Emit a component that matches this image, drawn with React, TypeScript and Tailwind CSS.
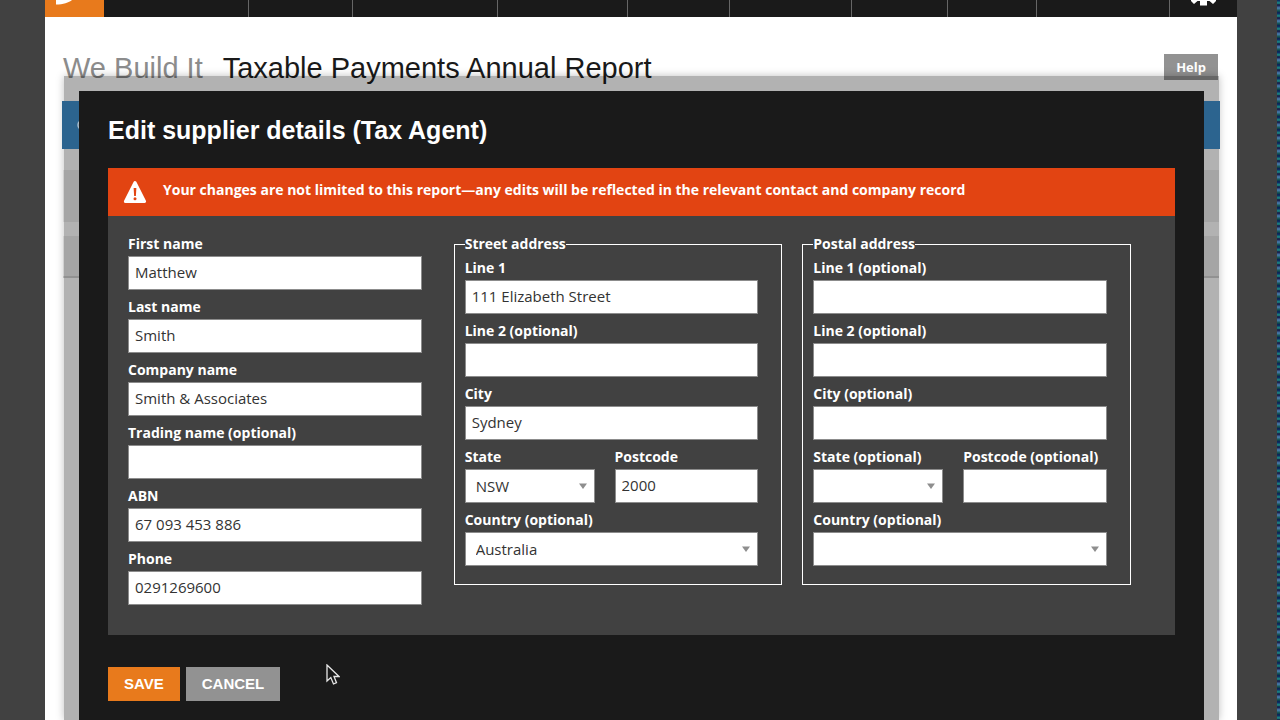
import { useState } from 'react';
import type { ReactNode } from 'react';

type FieldProps = {
  id: string;
  label: string;
  value?: string;
};

const navItems = [
  'w-[145px]',
  'w-[104px]',
  'w-[145px]',
  'w-[130px]',
  'w-[102px]',
  'w-[122px]',
  'w-[96px]',
  'w-[89px]',
];

function TextField({ id, label, value = '' }: FieldProps) {
  const [text, setText] = useState(value);

  return (
    <div className="min-w-0">
      <label htmlFor={id} className="block mb-0.5 text-sm leading-5 font-bold whitespace-nowrap">
        {label}
      </label>
      <input
        id={id}
        type="text"
        value={text}
        onChange={(e) => setText(e.target.value)}
        className="block w-full h-[34px] px-1.5 pb-0.5 bg-white border border-[#8c8c8c] text-[15px] leading-5 text-[#333333] outline-none"
      />
    </div>
  );
}

function SelectField({ id, label, value = '', options }: FieldProps & { options: string[] }) {
  const [selected, setSelected] = useState(value);

  return (
    <div className="min-w-0">
      <label htmlFor={id} className="block mb-0.5 text-sm leading-5 font-bold whitespace-nowrap">
        {label}
      </label>
      <div className="relative">
        <select
          id={id}
          value={selected}
          onChange={(e) => setSelected(e.target.value)}
          className="block appearance-none w-full h-[34px] px-2.5 bg-white border border-[#8c8c8c] rounded-none text-[15px] leading-5 text-[#333333] outline-none"
        >
          {options.map((option) => (
            <option key={option} value={option}>{option}</option>
          ))}
        </select>
        <svg viewBox="0 0 8 6" className="absolute right-2 top-3.5 w-2 h-1.5 pointer-events-none" aria-hidden="true">
          <path d="M0 0.5h8L4 6z" fill="#8e8e8e" />
        </svg>
      </div>
    </div>
  );
}

function AddressGroup({ title, children }: { title: string; children: ReactNode }) {
  return (
    <fieldset className="min-w-0 self-start border border-white pl-2.5 pr-[23px] pb-[18px]">
      <legend className="text-sm leading-5 font-bold">{title}</legend>
      <div className="flex flex-col gap-[7px] pt-1">{children}</div>
    </fieldset>
  );
}

function EditSupplier() {
  const states = ['', 'ACT', 'NSW', 'NT', 'QLD', 'SA', 'TAS', 'VIC', 'WA'];
  const countries = ['', 'Australia', 'New Zealand'];

  return (
    <form className="h-full bg-[#1a1a1a] px-[29px] pt-[25px] text-white" onSubmit={(e) => e.preventDefault()}>
      <h2 className="font-['Liberation_Sans',sans-serif] text-[25px] leading-7 font-bold mb-6">
        Edit supplier details (Tax Agent)
      </h2>

      {/* Warning banner */}
      <div className="flex items-center h-12 px-[15px] gap-4 bg-[#e24412]">
        <svg viewBox="0 0 24 24" className="w-6 h-6 shrink-0" aria-hidden="true">
          <path d="M12 2.500 21.600 21.500H2.400z" fill="#fff" stroke="#fff" strokeWidth="3" strokeLinejoin="round" />
          <path d="M10.600 8h2.800l-.5 8h-1.800z" fill="#e24412" />
          <circle cx="12" cy="18.8" r="1.5" fill="#e24412" />
        </svg>
        <p className="pb-1 text-sm leading-5 font-bold">
          Your changes are not limited to this report—any edits will be reflected in the relevant contact and company record
        </p>
      </div>

      <div className="grid grid-cols-[306fr_329fr_329fr] gap-5 bg-[#414141] pl-5 pr-11 pt-[18px] pb-[30px]">
        <div className="flex flex-col gap-[7px] pr-3">
          <TextField id="first-name" label="First name" value="Matthew" />
          <TextField id="last-name" label="Last name" value="Smith" />
          <TextField id="company" label="Company name" value="Smith & Associates" />
          <TextField id="trading" label="Trading name (optional)" />
          <TextField id="abn" label="ABN" value="67 093 453 886" />
          <TextField id="phone" label="Phone" value="0291269600" />
        </div>

        <AddressGroup title="Street address">
          <TextField id="street-1" label="Line 1" value="111 Elizabeth Street" />
          <TextField id="street-2" label="Line 2 (optional)" />
          <TextField id="street-city" label="City" value="Sydney" />
          <div className="grid grid-cols-[130fr_144fr] gap-5">
            <SelectField id="street-state" label="State" value="NSW" options={states} />
            <TextField id="street-postcode" label="Postcode" value="2000" />
          </div>
          <SelectField id="street-country" label="Country (optional)" value="Australia" options={countries} />
        </AddressGroup>

        <AddressGroup title="Postal address">
          <TextField id="postal-1" label="Line 1 (optional)" />
          <TextField id="postal-2" label="Line 2 (optional)" />
          <TextField id="postal-city" label="City (optional)" />
          <div className="grid grid-cols-[130fr_144fr] gap-5">
            <SelectField id="postal-state" label="State (optional)" options={states} />
            <TextField id="postal-postcode" label="Postcode (optional)" />
          </div>
          <SelectField id="postal-country" label="Country (optional)" options={countries} />
        </AddressGroup>
      </div>

      <div className="flex gap-1.5 pt-8 font-['Liberation_Sans',sans-serif] text-[15px] leading-5 font-bold">
        <button type="submit" className="h-[34px] px-4 bg-[#e87a1c]">SAVE</button>
        <button type="button" className="h-[34px] px-4 bg-[#929292]">CANCEL</button>
      </div>
    </form>
  );
}

export default function App() {
  return (
    <div className="relative min-h-screen bg-[#414141] pl-[45px] pr-[43px] font-['Open_Sans',sans-serif]">
      <div className="relative min-h-screen bg-white">
        {/* Top navigation */}
        <header className="flex h-[17px] bg-[#1a1a1a] overflow-hidden">
          <div className="w-[59px] shrink-0 bg-[#e87a1c]">
            <svg viewBox="0 0 59 17" className="w-full h-full" aria-hidden="true">
              <path d="M11 0H27C24 2.500 18 4.500 11 4.500z" fill="#fff" />
            </svg>
          </div>
          <nav className="flex grow">
            {navItems.map((width, i) => (
              <div key={i} className={`${width} border-r border-[#666666]`} />
            ))}
            <div className="grow border-r border-[#666666]" />
          </nav>
          <div className="w-[67px] shrink-0">
            <svg viewBox="0 0 67 17" className="w-full h-full" aria-hidden="true">
              <path d="M21 0h25v1l-3 3-3.500-3H37v4.500h-7V1h-2.500L24 4l-3-3z" fill="#fff" />
            </svg>
          </div>
        </header>

        <div className="flex items-start justify-between pl-[18px] pr-[19px] h-[84px] pt-[35px]">
          <h1 className="flex gap-5 font-['Liberation_Sans',sans-serif] text-[29px] leading-8 text-[#1a1a1a]">
            <span className="text-[#8c8c8c]">We Build It</span>
            <span>Taxable Payments Annual Report</span>
          </h1>
          <button type="button" className="mt-0.5 h-[26px] px-3 bg-[#929292] text-white text-[13px] leading-5 font-bold">
            Help
          </button>
        </div>

        {/* Report rows behind the dialog */}
        <div className="mx-[18px] pt-[69px]">
          <div className="h-[52px] bg-[#ececec]" />
          <div className="mt-3.5 h-[42px] bg-[#ececec] border-b-2 border-[#d0d0d0]" />
        </div>

        <div className="absolute top-[76px] bottom-0 left-[19px] right-[18px] bg-black/30 shadow-[0_0_8px_rgba(0,0,0,0.25)]" />
        <div className="absolute top-[101px] left-[17px] right-[17px] h-12 bg-[#2c648f]">
          <svg viewBox="0 0 12 12" className="absolute left-[15px] top-[18px] w-3 h-3" aria-hidden="true">
            <circle cx="6" cy="6" r="5" fill="none" stroke="#a9bccb" strokeWidth="1.5" />
          </svg>
        </div>
        <div className="absolute top-[91px] bottom-0 left-[34px] right-[33px]">
          <EditSupplier />
        </div>

        <svg viewBox="0 0 14 22" className="absolute left-[281px] top-[664px] w-3.5 h-[22px] pointer-events-none" aria-hidden="true">
          <path d="M1 1v16l3.800-3.500L7.500 20l3-1.300L8 12.500h5z" fill="#1a1a1a" stroke="#e8e8e8" strokeWidth="1.3" />
        </svg>
      </div>

      {/* Speckled screen edge */}
      <div className="absolute inset-y-0 right-0 w-[3px] bg-[repeating-linear-gradient(180deg,#0b1a5c_0px,#1c8f86_3px,#12123f_5px,#4b7fb0_8px,#0d4f4a_11px,#0b1a5c_13px)]" />
    </div>
  );
}
